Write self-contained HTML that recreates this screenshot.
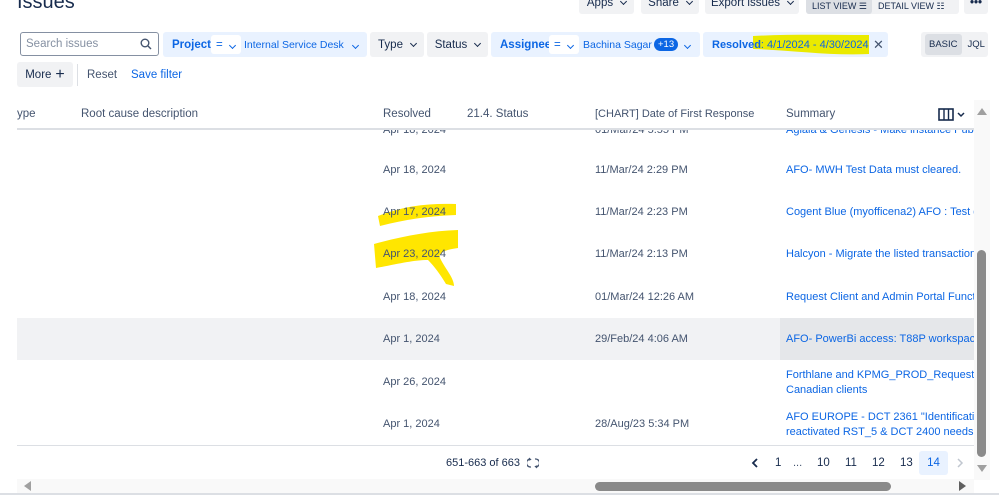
<!DOCTYPE html>
<html><head><meta charset="utf-8">
<style>
*{box-sizing:border-box;margin:0;padding:0}
body{width:999px;height:495px;overflow:hidden;background:#fff;font-family:"Liberation Sans",sans-serif;font-size:12px;color:#44546f;position:relative}
.a{position:absolute;white-space:nowrap}
.btn{position:absolute;background:#f1f2f4;border-radius:3px;color:#172b4d;font-size:11.5px;display:flex;align-items:center;justify-content:center;white-space:nowrap}
.chip{position:absolute;background:#e9f2ff;border-radius:3px;height:25px;top:32px}
.ct{position:absolute;top:7px;color:#0c66e4;font-size:11.5px;white-space:nowrap}
.eq{position:absolute;top:3px;background:#fff;border-radius:3px;height:19px;width:30px;color:#0c66e4;font-size:11.5px;padding:4px 0 0 5px}
.blue{color:#0c66e4}
.hd{color:#44546f;font-size:11.5px}
.c{color:#44546f;font-size:11px}
.s{color:#0c66e4;font-size:11px;overflow:hidden}
.chev{display:inline-block;width:5px;height:5px;border-right:1.5px solid currentColor;border-bottom:1.5px solid currentColor;transform:rotate(45deg);margin:-3px 0 0 8px}
</style></head><body>
<div class="a" style="left:17px;top:-9px;font-size:20px;color:#172b4d">Issues</div>

<div class="btn" style="left:579px;top:-8px;width:55px;height:22px">Apps<span class="chev"></span></div>
<div class="btn" style="left:641px;top:-8px;width:58px;height:22px">Share<span class="chev"></span></div>
<div class="btn" style="left:705px;top:-8px;width:94px;height:22px">Export issues<span class="chev"></span></div>
<div class="btn" style="left:806px;top:-8px;width:153px;height:22px;font-size:9px;justify-content:flex-start"><span style="background:#dcdfe4;height:22px;width:66px;padding:9px 0 0 6px;border-radius:3px">LIST VIEW ☰</span><span style="padding:9px 0 0 6px;height:22px">DETAIL VIEW ☷</span></div>
<div class="btn" style="left:964px;top:-8px;width:24px;height:22px;font-weight:bold">•••</div>

<div class="a" style="left:20px;top:32px;width:139px;height:24px;border:1.5px solid #8590a2;border-radius:3px;padding:5px 5px;color:#8590a2;font-size:11.5px">Search issues
<svg style="position:absolute;right:6px;top:5px" width="12" height="12" viewBox="0 0 12 12"><circle cx="5" cy="5" r="3.8" fill="none" stroke="#44546f" stroke-width="1.4"/><line x1="8" y1="8" x2="11" y2="11" stroke="#44546f" stroke-width="1.4"/></svg></div>

<div class="chip" style="left:163px;width:204px"><span class="ct" style="left:9px;font-weight:bold">Project</span><span class="eq" style="left:48px">=<span class="chev" style="margin-left:7px"></span></span><span class="ct" style="left:81px;font-size:10.5px">Internal Service Desk</span><span class="ct" style="left:190px"><span class="chev" style="margin-left:0"></span></span></div>
<div class="btn" style="left:370px;top:32px;width:54px;height:25px">Type<span class="chev"></span></div>
<div class="btn" style="left:427px;top:32px;width:61px;height:25px">Status<span class="chev"></span></div>
<div class="chip" style="left:491px;width:209px"><span class="ct" style="left:9px;font-weight:bold">Assignee</span><span class="eq" style="left:58px">=<span class="chev" style="margin-left:7px"></span></span><span class="ct" style="left:92px;font-size:10.5px">Bachina Sagar</span><span class="a" style="left:163px;top:6px;background:#0c66e4;color:#fff;border-radius:8px;font-size:9.5px;padding:1px 4px">+13</span><span class="ct" style="left:194px"><span class="chev" style="margin-left:0"></span></span></div>
<div class="chip" style="left:703px;width:185px">
<svg class="a" style="left:48px;top:0" width="120" height="25"><path d="M2 4 C40 2 80 3 118 3 L118 22 C80 24 40 18 2 17 Z" fill="#eaea00"/></svg>
<span class="ct" style="left:9px;font-size:11px"><b>Resolved</b>: 4/1/2024 - 4/30/2024</span><span class="ct" style="left:170px;top:5px;color:#44546f;font-size:13px">✕</span></div>
<div class="btn" style="left:921px;top:32px;width:67px;height:25px;font-size:9.5px;justify-content:flex-start;padding-left:4px"><span style="background:#dcdfe4;padding:5px 4px;border-radius:3px">BASIC</span><span style="padding-left:6px">JQL</span></div>

<div class="btn" style="left:17px;top:62px;width:56px;height:25px">More <span style="font-size:16px;margin-left:4px">+</span></div>
<div class="a" style="left:77px;top:64px;width:1px;height:22px;background:#dcdfe4"></div>
<div class="a" style="left:87px;top:69px;color:#44546f;font-size:11.5px">Reset</div>
<div class="a blue" style="left:131px;top:69px;font-size:11.5px">Save filter</div>

<div class="a hd" style="left:17px;top:108px">ype</div>
<div class="a hd" style="left:81px;top:108px">Root cause description</div>
<div class="a hd" style="left:383px;top:108px">Resolved</div>
<div class="a hd" style="left:467px;top:108px">21.4. Status</div>
<div class="a hd" style="left:595px;top:108px;font-size:11px">[CHART] Date of First Response</div>
<div class="a hd" style="left:786px;top:108px">Summary</div>
<svg class="a" style="left:938px;top:108px" width="28" height="14"><rect x="1" y="1" width="14" height="11" fill="none" stroke="#172b4d" stroke-width="1.6"/><line x1="6" y1="1" x2="6" y2="12" stroke="#172b4d" stroke-width="1.4"/><line x1="10.5" y1="1" x2="10.5" y2="12" stroke="#172b4d" stroke-width="1.4"/><path d="M20 5 l3 3 l3 -3" fill="none" stroke="#172b4d" stroke-width="1.5"/></svg>
<div class="a" style="left:17px;top:128px;width:957px;height:2px;background:#dcdfe4"></div>

<div class="a" style="left:17px;top:318px;width:957px;height:42px;background:#f1f2f4"></div>
<div class="a" style="left:780px;top:318px;width:194px;height:42px;background:#e5e7ea"></div>

<div class="a c" style="left:383px;top:124px;clip-path:inset(6px 0 0 0)">Apr 18, 2024</div>
<div class="a c" style="left:595px;top:124px;clip-path:inset(6px 0 0 0)">01/Mar/24 5:55 PM</div>
<div class="a s" style="left:786px;top:124px;width:188px;clip-path:inset(6px 0 0 0)">Aglaia &amp; Genesis - Make instance Public</div>

<svg class="a" style="left:368px;top:198px" width="95" height="92"><path d="M10 18 C35 8 60 5 88 6 L88 17 C60 18 35 22 12 28 Z" fill="#ffe600"/><path d="M6 46 C35 38 62 33 90 32 L90 50 C76 52 70 55 72 60 C78 72 86 80 86 88 L78 86 C72 76 66 68 60 62 C45 62 30 66 8 70 Z" fill="#ffe600"/></svg>

<div class="a c" style="left:383px;top:164px">Apr 18, 2024</div>
<div class="a c" style="left:595px;top:164px">11/Mar/24 2:29 PM</div>
<div class="a s" style="left:786px;top:164px;width:188px">AFO- MWH Test Data must cleared.</div>

<div class="a c" style="left:383px;top:206px">Apr 17, 2024</div>
<div class="a c" style="left:595px;top:206px">11/Mar/24 2:23 PM</div>
<div class="a s" style="left:786px;top:206px;width:188px">Cogent Blue (myofficena2) AFO : Test data</div>

<div class="a c" style="left:383px;top:248px">Apr 23, 2024</div>
<div class="a c" style="left:595px;top:248px">11/Mar/24 2:13 PM</div>
<div class="a s" style="left:786px;top:248px;width:188px">Halcyon - Migrate the listed transactions</div>

<div class="a c" style="left:383px;top:291px">Apr 18, 2024</div>
<div class="a c" style="left:595px;top:291px">01/Mar/24 12:26 AM</div>
<div class="a s" style="left:786px;top:291px;width:188px">Request Client and Admin Portal Functions</div>

<div class="a c" style="left:383px;top:333px">Apr 1, 2024</div>
<div class="a c" style="left:595px;top:333px">29/Feb/24 4:06 AM</div>
<div class="a s" style="left:786px;top:333px;width:188px">AFO- PowerBi access: T88P workspace</div>

<div class="a c" style="left:383px;top:376px">Apr 26, 2024</div>
<div class="a s" style="left:786px;top:368px;width:188px;line-height:15px">Forthlane and KPMG_PROD_Request to c<br>Canadian clients</div>

<div class="a c" style="left:383px;top:418px">Apr 1, 2024</div>
<div class="a c" style="left:595px;top:418px">28/Aug/23 5:34 PM</div>
<div class="a s" style="left:786px;top:410px;width:188px;line-height:15px">AFO EUROPE - DCT 2361 "Identification of<br>reactivated RST_5 &amp; DCT 2400 needs to</div>

<div class="a" style="left:17px;top:445px;width:957px;height:1px;background:#dcdfe4"></div>

<div class="a" style="left:446px;top:457px;color:#172b4d;font-size:11px">651-663 of 663</div>
<svg class="a" style="left:527px;top:457px" width="12" height="12" viewBox="0 0 12 12"><path d="M3 2 A4 4 0 0 0 4 10 M9 10 A4 4 0 0 0 8 2" fill="none" stroke="#44546f" stroke-width="1.3"/><path d="M2 1 l1.5 1.5 l-2 0.7 M10 11 l-1.5 -1.5 l2 -0.7" fill="none" stroke="#44546f" stroke-width="1.2"/></svg>
<svg class="a" style="left:750px;top:457px" width="10" height="12"><path d="M7 2 L3 6 L7 10" fill="none" stroke="#172b4d" stroke-width="1.8"/></svg>
<div class="a" style="left:775px;top:457px;color:#172b4d;font-size:11.5px">1</div>
<div class="a" style="left:793px;top:457px;color:#44546f;font-size:11px">...</div>
<div class="a" style="left:817px;top:457px;color:#172b4d;font-size:11.5px">10</div>
<div class="a" style="left:845px;top:457px;color:#172b4d;font-size:11.5px">11</div>
<div class="a" style="left:872px;top:457px;color:#172b4d;font-size:11.5px">12</div>
<div class="a" style="left:900px;top:457px;color:#172b4d;font-size:11.5px">13</div>
<div class="a" style="left:919px;top:451px;width:29px;height:24px;background:#e9f2ff;border-radius:3px;color:#0c66e4;font-size:11.5px;display:flex;align-items:center;justify-content:center">14</div>
<svg class="a" style="left:955px;top:457px" width="10" height="12"><path d="M3 2 L7 6 L3 10" fill="none" stroke="#c1c7d0" stroke-width="1.5"/></svg>

<div class="a" style="left:974px;top:100px;width:16px;height:380px;background:#f9f9f9"></div>
<div class="a" style="left:977px;top:108px;width:0;height:0;border-left:5px solid transparent;border-right:5px solid transparent;border-bottom:7px solid #a0a0a0"></div>
<div class="a" style="left:977px;top:250px;width:9px;height:207px;background:#8a8a8a;border-radius:5px"></div>
<div class="a" style="left:977px;top:465px;width:0;height:0;border-left:5px solid transparent;border-right:5px solid transparent;border-top:7px solid #a0a0a0"></div>

<div class="a" style="left:17px;top:479px;width:957px;height:14px;background:#f9f9f9"></div>
<div class="a" style="left:24px;top:481px;width:0;height:0;border-top:5px solid transparent;border-bottom:5px solid transparent;border-right:7px solid #a0a0a0"></div>
<div class="a" style="left:595px;top:482px;width:296px;height:9px;background:#8a8a8a;border-radius:5px"></div>
<div class="a" style="left:959px;top:481px;width:0;height:0;border-top:5px solid transparent;border-bottom:5px solid transparent;border-left:7px solid #606060"></div>
<div class="a" style="left:0;top:493px;width:999px;height:2px;background:#dcdfe4"></div>
</body></html>
